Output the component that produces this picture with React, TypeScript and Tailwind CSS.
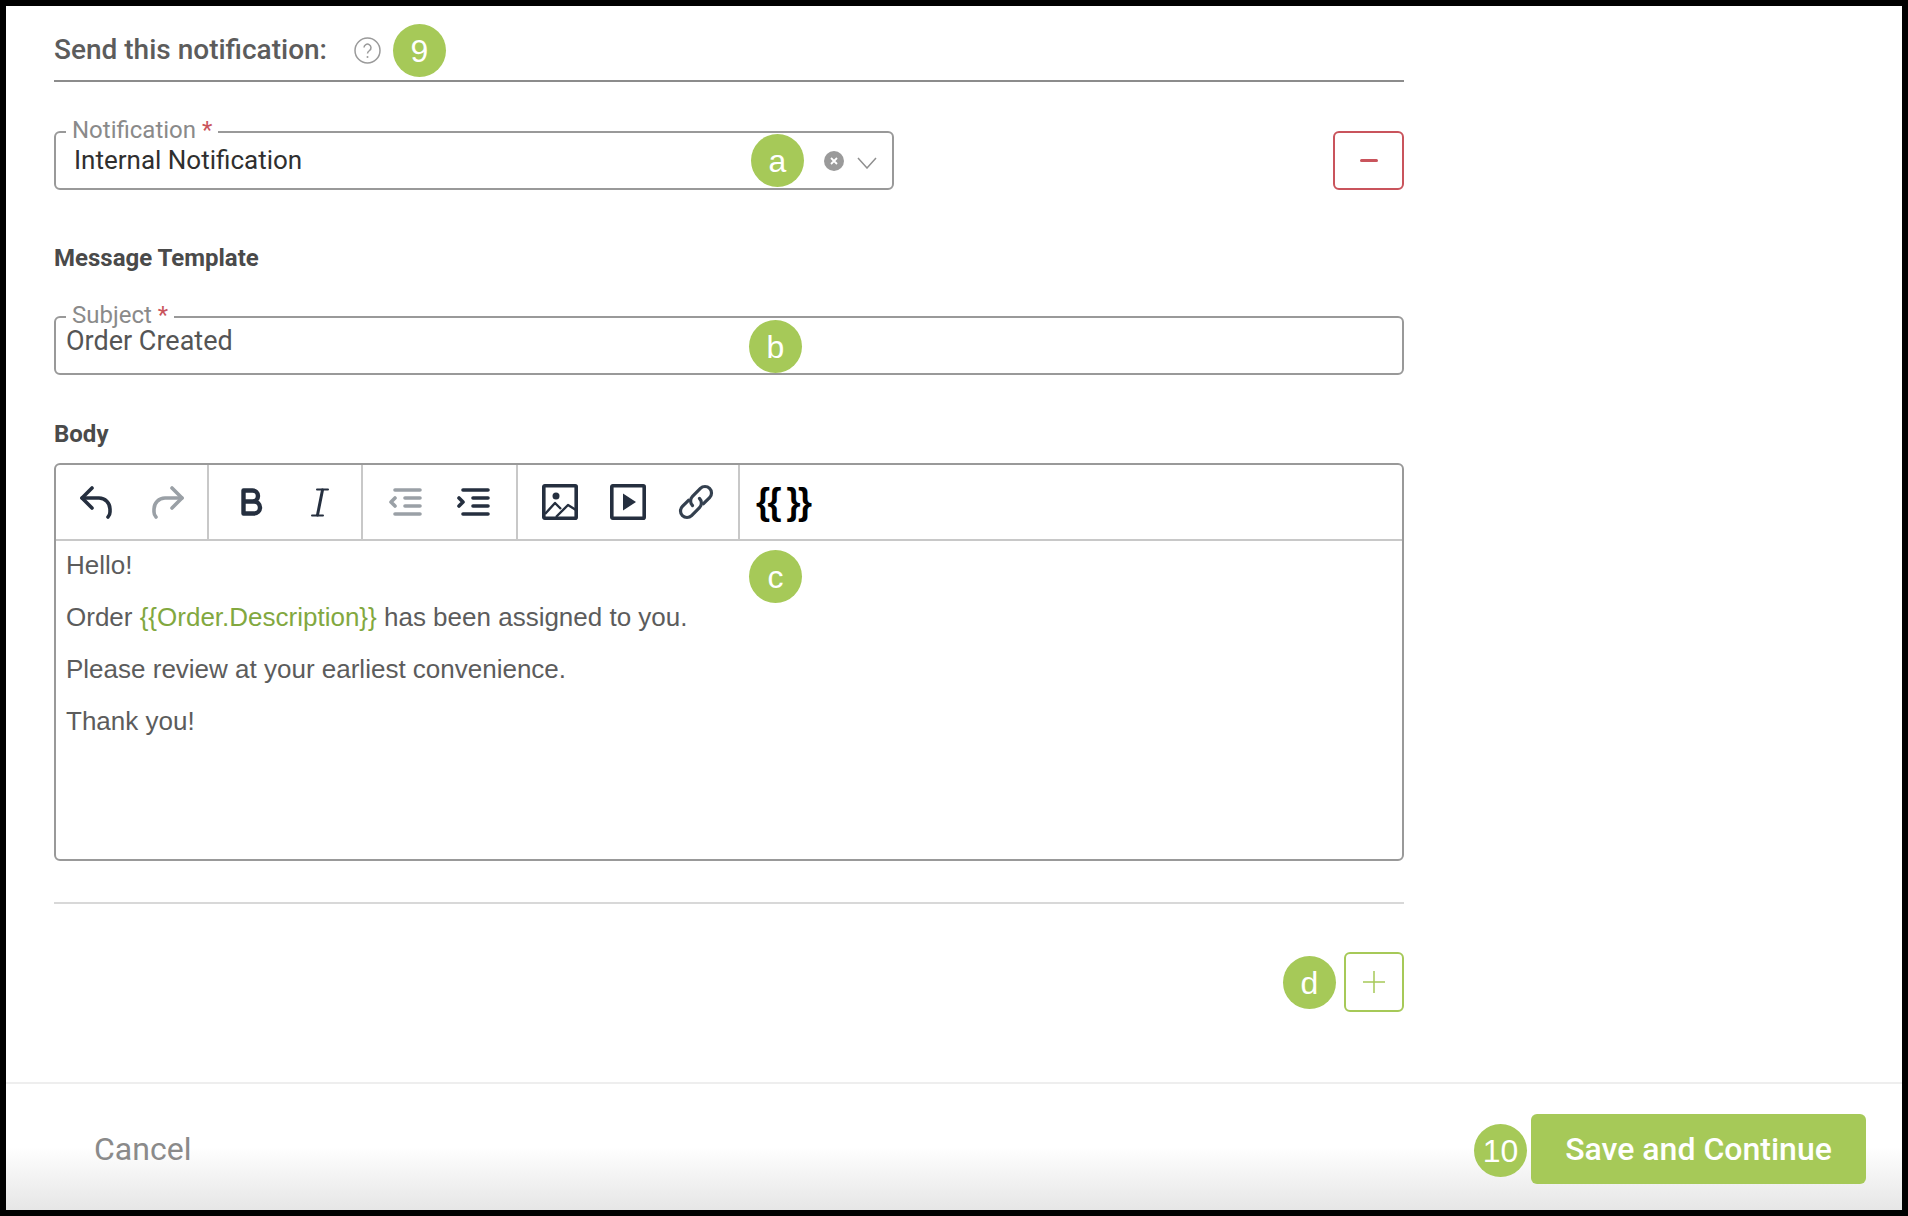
import type {ReactNode} from "react";

const dark = "#252f3f";
const grey = "#9aa0a6";

function Badge({children, className}: {children: ReactNode; className: string}) {
    return <span
        className={`absolute flex size-[53px] items-center justify-center rounded-full bg-[#a6c958] font-['Liberation_Sans',sans-serif] text-[32px] text-white ${className}`}>
        {children}
    </span>
}

function Legend({children}: {children: string}) {
    return <span
        className="absolute left-[10px] top-[-14px] bg-white px-[6px] font-['Roboto',sans-serif] text-[24px] leading-[22px] text-[#8a8a8a]">
        {children} <span className="text-[#c9545c]">*</span>
    </span>
}

function Undo({color, flip}: {color: string; flip?: boolean}) {
    return <svg width="32" height="33" viewBox="0 0 32 33" fill="none" stroke={color} strokeWidth="3.6"
                strokeLinecap="round" strokeLinejoin="round" className={flip ? "-scale-x-100" : ""}>
        <path d="M12 2 2 12l10 10"/>
        <path d="M2 12h17a11 11 0 0 1 11 11v3q0 3-2 5"/>
    </svg>
}

function Indent({color, out}: {color: string; out?: boolean}) {
    return <svg width="33" height="28" viewBox="0 0 33 28" fill="none" stroke={color} strokeWidth="3.6"
                strokeLinecap="round" strokeLinejoin="round">
        <path d="M6 2h25M16 10h15M16 18h15M6 26h25"/>
        <path d={out ? "M6 10l-4 4 4 4" : "M2 10l4 4-4 4"}/>
    </svg>
}

function Toolbar() {
    return <div className="flex h-[76px] border-b-2 border-[#c8c8c8]">
        <div className="flex w-[153px] items-center justify-center gap-[40px] border-r-2 border-[#c8c8c8]">
            <Undo color={dark}/>
            <Undo color={grey} flip/>
        </div>
        <div className="flex w-[154px] items-center justify-center gap-[48px] border-r-2 border-[#c8c8c8]">
            <svg width="22" height="28" viewBox="0 0 22 28" fill="none" stroke={dark} strokeWidth="4.4"
                 strokeLinejoin="round">
                <path d="M2.5 2.5h9a5.5 5.5 0 0 1 0 11h-9zM2.5 13.5h10.500a6 6 0 0 1 0 12h-10.500z"/>
            </svg>
            <svg width="18" height="29" viewBox="0 0 18 29" fill="none" stroke={dark} strokeLinecap="round">
                <path d="M6 1.500h11M1 27.500h11" strokeWidth="2"/>
                <path d="M11.500 2 6.500 27" strokeWidth="3"/>
            </svg>
        </div>
        <div className="flex w-[155px] items-center justify-center gap-[35px] border-r-2 border-[#c8c8c8]">
            <Indent color={grey} out/>
            <Indent color={dark}/>
        </div>
        <div className="flex w-[222px] items-center justify-center gap-[32px] border-r-2 border-[#c8c8c8]">
            <svg width="36" height="36" viewBox="0 0 36 36" fill="none" stroke={dark} strokeWidth="3.600"
                 strokeLinejoin="round">
                <rect x="1.800" y="1.800" width="32.400" height="32.400" rx="1"/>
                <circle cx="14" cy="12" r="3.500" fill={dark} stroke="none"/>
                <path d="M3 30 13 19l6 6M14 33l12-12 8 5" strokeWidth="2.400"/>
            </svg>
            <svg width="36" height="36" viewBox="0 0 36 36" fill="none" stroke={dark} strokeWidth="3.600"
                 strokeLinejoin="round">
                <rect x="1.800" y="1.800" width="32.400" height="32.400" rx="1"/>
                <path d="M13 9.500 26 18 13 26.500z" fill={dark} stroke="none"/>
            </svg>
            <svg width="36" height="36" viewBox="0 0 36 36" fill="none" stroke="#34404f" strokeWidth="3.200"
                 strokeLinecap="round" strokeLinejoin="round">
                <path d="M25.500 19.700 31.600 13.600A6.500 6.500 0 0 0 22.400 4.400L14.500 12.300A6.500 6.500 0 0 0 14.500 21.500"/>
                <path d="M10.500 16.300 4.400 22.400A6.500 6.500 0 0 0 13.600 31.600L21.500 23.700A6.500 6.500 0 0 0 21.500 14.500"/>
            </svg>
        </div>
        <div
            className="flex items-center pl-[16px] font-['Liberation_Sans',sans-serif] text-[36px] font-bold tracking-[-2.5px] text-black">
            {"{{ }}"}
        </div>
    </div>
}

export default function App() {
    return <div className="h-[1216px] w-[1908px] bg-black p-[6px] font-['Roboto',sans-serif]">
        <div className="flex h-full flex-col bg-white">
            <main className="flex-1 px-[48px]">
                <div className="w-[1350px]">
                    <div className="relative flex h-[76px] items-center gap-[27px] border-b-2 border-[#8c8c8c] pt-[14px]">
                        <h2 className="text-[28px] font-medium text-[#5c5c5c]">Send this notification:</h2>
                        <svg width="27" height="27" viewBox="0 0 27 27" fill="none" stroke="#9a9a9a">
                            <circle cx="13.500" cy="13.500" r="12.500" strokeWidth="1.500"/>
                            <path d="M10 10.500a3.500 3.500 0 1 1 5.500 3c-1.500 1-2 1.500-2 3" strokeWidth="1.500"/>
                            <circle cx="13.500" cy="20" r="1" fill="#9a9a9a" stroke="none"/>
                        </svg>
                        <Badge className="left-[339px] top-[18px]">9</Badge>
                    </div>

                    <div className="mt-[49px] flex justify-between">
                        <div className="relative flex h-[59px] w-[840px] items-center rounded-[6px] border-2 border-[#999] pl-[18px]">
                            <Legend>Notification</Legend>
                            <span className="text-[26px] text-[#2f2f2f]">Internal Notification</span>
                            <Badge className="left-[695px] top-[1px]">a</Badge>
                            <span className="ml-auto flex size-[20px] items-center justify-center rounded-full bg-[#9a9a9a] text-white">
                                <svg width="8" height="8" viewBox="0 0 8 8" stroke="white" strokeWidth="1.800">
                                    <path d="M1 1l6 6M7 1 1 7"/>
                                </svg>
                            </span>
                            <svg width="20" height="12" viewBox="0 0 20 12" fill="none" stroke="#8f8f8f" strokeWidth="1.500"
                                 className="ml-[13px] mr-[15px] mt-[4px]">
                                <path d="M1 1l9 10 9-10"/>
                            </svg>
                        </div>
                        <button className="flex h-[59px] w-[71px] items-center justify-center rounded-[6px] border-2 border-[#c9545c]">
                            <span className="h-[2.500px] w-[18px] rounded-full bg-[#c9545c]"/>
                        </button>
                    </div>

                    <h3 className="mt-[54px] text-[24px] font-bold leading-[28px] text-[#4a4a4a]">Message Template</h3>

                    <div className="relative mt-[44px] flex h-[59px] items-start rounded-[6px] border-2 border-[#999] pl-[10px]">
                        <Legend>Subject</Legend>
                        <span className="mt-[7px] text-[27px] leading-[32px] text-[#555]">Order Created</span>
                        <Badge className="left-[693px] top-[2px]">b</Badge>
                    </div>

                    <h3 className="mt-[45px] text-[24px] font-bold leading-[28px] text-[#4a4a4a]">Body</h3>

                    <div className="relative mt-[15px] h-[398px] rounded-[6px] border-2 border-[#999]">
                        <Toolbar/>
                        <div className="space-y-[22px] px-[10px] pt-[9px] font-['Liberation_Sans',sans-serif] text-[26px] leading-[30px] text-[#5c5c5c]">
                            <p>Hello!</p>
                            <p>Order <span className="text-[#82a83f]">{"{{Order.Description}}"}</span> has been assigned to you.</p>
                            <p>Please review at your earliest convenience.</p>
                            <p>Thank you!</p>
                        </div>
                        <Badge className="left-[693px] top-[85px]">c</Badge>
                    </div>

                    <div className="mt-[41px] border-t-2 border-[#d8d8d8]"/>

                    <div className="relative mt-[48px] flex justify-end">
                        <Badge className="right-[68px] top-[4px]">d</Badge>
                        <button className="flex h-[60px] w-[60px] items-center justify-center rounded-[6px] border-2 border-[#a6c958]">
                            <svg width="22" height="22" viewBox="0 0 22 22" stroke="#a6c958" strokeWidth="1.500">
                                <path d="M11 0v22M0 11h22"/>
                            </svg>
                        </button>
                    </div>
                </div>
            </main>

            <footer className="relative flex h-[128px] items-center justify-between border-t-2 border-[#eeeeee] bg-gradient-to-b from-white from-50% to-[#e6e6e6] pl-[88px] pr-[36px] pt-[3px]">
                <span className="text-[32px] text-[#8a8a8a]">Cancel</span>
                <Badge className="right-[375px] top-[40px]">10</Badge>
                <button className="flex h-[70px] w-[335px] items-center justify-center rounded-[6px] bg-[#a6c958] text-[32px] font-medium text-white">
                    Save and Continue
                </button>
            </footer>
        </div>
    </div>
}
